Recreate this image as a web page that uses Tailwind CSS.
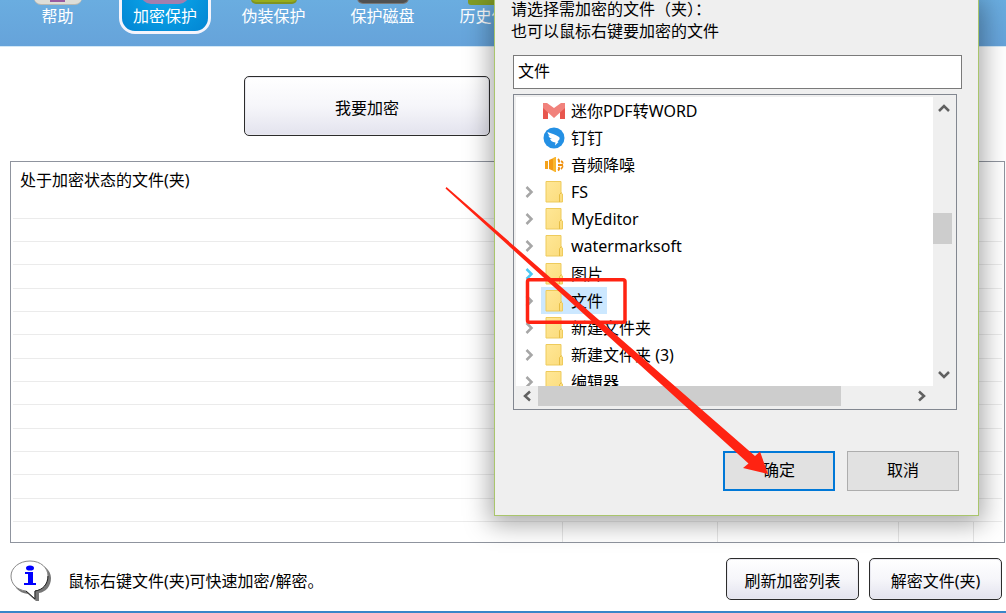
<!DOCTYPE html>
<html lang="zh-CN">
<head>
<meta charset="utf-8">
<title>加密保护</title>
<script src="https://cdn.jsdelivr.net/npm/@tailwindcss/browser@4"></script>
</head>
<body class="relative min-h-screen overflow-hidden flex flex-col bg-white text-black text-base font-['Noto_Sans','Noto_Sans_CJK_SC',sans-serif]">

<header class="h-[47px] shrink-0 overflow-hidden border-b border-[#d3e8f6] bg-linear-to-b from-[#6aade0] to-[#66a3da] text-white">
  <nav class="h-[34px] flex items-end gap-[17px] pl-3">
    <a href="#" class="w-[91px] h-24 pb-[6px] flex flex-col items-center justify-end leading-6">
      <svg class="w-12 h-12 -mb-1" viewBox="0 0 48 48"><rect x="0" y="0" width="48" height="45" rx="7" fill="#b9b9b2"/><rect x="0" y="0" width="48" height="44" rx="7" fill="#deded8"/><rect x="16" y="30" width="15" height="12" fill="#9a5aa0"/></svg>
      <span>帮助</span>
    </a>
    <a href="#" class="-ml-px w-[92px] h-24 pb-[3px] border-3 border-[#f4f4fc] rounded-2xl bg-radial from-[#10b0f0] to-[#0384d2] flex flex-col items-center justify-end leading-6">
      <svg class="w-12 h-12 -mb-1" viewBox="0 0 48 48"><rect x="0" y="0" width="48" height="44" rx="10" fill="#a27fae"/></svg>
      <span>加密保护</span>
    </a>
    <a href="#" class="w-[91px] h-24 pb-[6px] flex flex-col items-center justify-end leading-6">
      <svg class="w-12 h-12 -mb-1" viewBox="0 0 48 48"><rect x="1" y="0" width="46" height="44" rx="5" fill="#7f9420"/><rect x="1" y="0" width="46" height="42" rx="5" fill="#97ad1c"/></svg>
      <span>伪装保护</span>
    </a>
    <a href="#" class="ml-px w-[91px] h-24 pb-[6px] flex flex-col items-center justify-end leading-6">
      <svg class="w-13 h-12 -mb-1" viewBox="0 0 52 48"><rect x="0" y="0" width="52" height="44" rx="6" fill="#777"/><rect x="1" y="0" width="50" height="43" rx="5" fill="#505050"/></svg>
      <span>保护磁盘</span>
    </a>
    <a href="#" class="ml-px w-[91px] h-24 pb-[6px] flex flex-col items-center justify-end leading-6">
      <svg class="w-12 h-12 -mb-1" viewBox="0 0 48 48"><rect x="0" y="0" width="48" height="45" rx="3" fill="#819c25"/></svg>
      <span>历史伪装</span>
    </a>
  </nav>
</header>

<main class="grow flex flex-col pl-[10px] pr-px">
  <button class="mt-[29px] ml-[234px] w-[246px] h-[60px] rounded-[5px] border border-[#2c2c2c] bg-linear-to-b from-white via-[#f6f6fa] to-[#e3e3ee] shadow-[inset_0_0_0_1px_#e9e9f0] pt-1">我要加密</button>

  <div class="mt-[25px] h-[382px] border border-[#8f949e] px-[2px]">
    <table class="w-full h-[360px] table-fixed border-collapse">
      <colgroup><col><col class="w-[155px]"><col class="w-[181px]"><col class="w-[75px]"><col class="w-[29px]"></colgroup>
      <thead>
        <tr class="h-14 border-b border-[#ebebeb]"><th colspan="5" class="align-top text-left font-normal pl-[7px] pt-[6px] leading-6">处于加密状态的文件(夹)</th></tr>
      </thead>
      <tbody id="rows"></tbody>
    </table>
    <div class="h-5 flex justify-end">
      <div class="w-[155px] border-l border-[#e6e6e6]"></div>
      <div class="w-[181px] border-l border-[#e6e6e6]"></div>
      <div class="w-[75px] border-l border-[#e6e6e6]"></div>
      <div class="w-[29px] border-l border-[#e6e6e6]"></div>
    </div>
  </div>

  <footer class="grow flex items-center pr-[3px] pt-[3px]">
    <svg class="w-[42px] h-[42px] mt-1 shrink-0" viewBox="0 0 42 42">
      <path d="M22 3C33 3 41 10 41 18C41 26 36 32 29 33L29 41L26 41L18 34C8 33 3 26 3 18C3 9 11 3 22 3Z" fill="#777"/>
      <path d="M20 1C31 1 38 8 38 16C38 24 33 30 25 31L25 39L16 31C7 30 1 24 1 16C1 8 9 1 20 1Z" fill="#fff" stroke="#888" stroke-width="1"/>
      <path d="M16 31L25 39L25 31C33 30 38 24 38 16" fill="none" stroke="#222" stroke-width="1"/>
      <ellipse cx="20" cy="8" rx="4" ry="2.600" fill="#00f"/>
      <path d="M15 12H23V23H26V25H14V23H18V14H15Z" fill="#00f"/>
    </svg>
    <p class="ml-4 grow pt-1">鼠标右键文件(夹)可快速加密/解密。</p>
    <button class="w-[133px] h-[42px] rounded-[5px] border border-[#2c2c2c] bg-linear-to-b from-white via-[#f6f6fa] to-[#e3e3ee] shadow-[inset_0_0_0_1px_#e9e9f0] pt-1">刷新加密列表</button>
    <button class="ml-[10px] w-[133px] h-[42px] rounded-[5px] border border-[#2c2c2c] bg-linear-to-b from-white via-[#f6f6fa] to-[#e3e3ee] shadow-[inset_0_0_0_1px_#e9e9f0] pt-1">解密文件(夹)</button>
  </footer>
</main>
<div class="h-[2px] bg-[#3a86c8]"></div>

<!-- folder picker -->
<section role="dialog" aria-label="浏览文件夹" class="absolute left-[494px] top-0 w-[485px] h-[516px] border-x border-b border-[#a9c56c] bg-[#efefef] shadow-[0_4px_24px_4px_rgba(0,0,0,0.35)] px-[18px] flex flex-col">
  <label for="folder" class="leading-[22px] -mt-[2px] -ml-[2px]">请选择需加密的文件（夹）：<br>也可以鼠标右键要加密的文件</label>
  <input id="folder" value="文件" class="mt-[13px] w-[449px] h-[34px] shrink-0 border border-[#7a7a7a] bg-white px-1 pb-1">
  <div class="mt-[5px] w-[444px] h-[316px] shrink-0 border border-[#828790] bg-[#efefef] p-[2px] pb-[3px] grid grid-cols-[1fr_21px] grid-rows-[1fr_20px]">
    <div class="min-h-0 overflow-hidden bg-white">
      <ul id="tree" class="h-[299px] grid grid-rows-11"></ul>
    </div>
    <div class="flex flex-col items-center justify-between relative">
      <svg class="w-5 h-6" viewBox="0 0 20 24"><path d="M5 14L10 9L15 14" fill="none" stroke="#606060" stroke-width="2.500"/></svg>
      <div class="absolute left-0 top-[116px] w-[19px] h-[31px] bg-[#cdcdcd]"></div>
      <svg class="w-5 h-6" viewBox="0 0 20 24"><path d="M5 10L10 15L15 10" fill="none" stroke="#606060" stroke-width="2.500"/></svg>
    </div>
    <div class="flex items-center">
      <svg class="w-[22px] h-5 shrink-0" viewBox="0 0 22 20"><path d="M14 5.500L9 10L14 14.500" fill="none" stroke="#606060" stroke-width="2.500"/></svg>
      <div class="w-[303px] h-full bg-[#cdcdcd]"></div>
      <svg class="w-5 h-5 ml-auto" viewBox="0 0 20 20"><path d="M6 5.500L11 10L6 14.500" fill="none" stroke="#606060" stroke-width="2.500"/></svg>
    </div>
  </div>
  <div class="mt-[41px] flex justify-end gap-3 pr-px">
    <button class="w-28 h-10 border-2 border-[#0078d7] bg-[#e1e1e1] pb-[2px]">确定</button>
    <button class="w-28 h-10 border border-[#adadad] bg-[#e1e1e1] pb-[2px]">取消</button>
  </div>
</section>

<!-- annotation -->
<svg class="absolute left-0 top-0 w-[1006px] h-[613px] pointer-events-none" viewBox="0 0 1006 613">
  <rect x="527.500" y="279.700" width="97.500" height="42.500" rx="2" fill="none" stroke="#ff2312" stroke-width="3.500"/>
  <path d="M446.500 187L755 456L760 451.500L768 474L743 468L748.500 463.500L445.500 188.500Z" fill="#ff2312"/>
</svg>

<template id="folderIcon"><svg class="w-[18px] h-[22px] shrink-0" viewBox="0 0 18 22"><defs><linearGradient id="fg" x1="0" y1="0" x2="1" y2="1"><stop offset="0" stop-color="#ffe796"/><stop offset="1" stop-color="#fbdc7d"/></linearGradient></defs><path d="M1 .5H16V12L17.500 13V21H1Z" fill="url(#fg)" stroke="#eecb5c"/><path d="M14.500 21V13.500L16.500 11.500" fill="none" stroke="#e6bd45"/></svg></template>
<template id="mIcon"><svg class="w-[22px] h-[22px] shrink-0" viewBox="0 0 22 22"><path d="M0 3V19H5V10L0 3Z" fill="#e8564e"/><path d="M22 3V19H17V10Z" fill="#e8564e"/><path d="M0 3H4L11 8L18 3H22V8L11 18L0 8Z" fill="#f1827c"/></svg></template>
<template id="dingIcon"><svg class="w-[22px] h-[22px] shrink-0" viewBox="0 0 22 22"><circle cx="11" cy="11" r="10.500" fill="#2490e4"/><path d="M4.500 5C9 7 13 7.500 16 10C17.500 11.500 16 13.500 14.500 14.500L15.500 15L12 18.500L12.500 15.500C9 15 7.500 13.500 7 12L9 12C6.500 11 5.500 9.500 5.500 8.500L7 8.500C5.500 7.500 4.700 6.500 4.500 5Z" fill="#fff"/></svg></template>
<template id="soundIcon"><svg class="w-[22px] h-[22px] shrink-0" viewBox="0 0 22 22"><path d="M2 7H5V15H2Z" fill="#f4a21c"/><path d="M6 6L13 3V18L6 15Z" fill="#f39a12"/><path d="M10 4L13 3V18L10 17Z" fill="#f9b62c"/><path d="M15 5Q17 7 15.500 8.500M15.500 13Q17 15 15 16.500M18 7Q20 8 19.500 9.500M19.500 12Q20 13 18 15M15 11H20" fill="none" stroke="#ee9010" stroke-width="1.800"/></svg></template>

<script>
const rows = document.getElementById('rows');
for (let i = 0; i < 13; i++) rows.insertAdjacentHTML('beforeend', '<tr class="border-b border-[#ebebeb]"><td colspan="5"></td></tr>');

const items = [['m','迷你PDF转WORD'],['ding','钉钉'],['sound','音频降噪'],['folder','FS'],['folder','MyEditor'],['folder','watermarksoft'],['folder','图片','hot'],['folder','文件','sel'],['folder','新建文件夹'],['folder','新建文件夹 (3)'],['folder','编辑器']];
const tree = document.getElementById('tree');
for (const [icon, name, state] of items) {
  const svg = document.getElementById(icon + 'Icon').innerHTML;
  const color = state === 'hot' ? '#4cc8f4' : '#a6a6a6';
  const arrow = icon === 'folder' ? `<svg class="w-3 h-4" viewBox="0 0 12 16"><path d="M3.500 3L8.500 8L3.500 13" fill="none" stroke="${color}" stroke-width="2.500"/></svg>` : '';
  const bg = state === 'sel' ? 'bg-[#cce8ff]' : '';
  tree.insertAdjacentHTML('beforeend', `<li class="flex items-center min-h-0 pl-[7px]"><span class="w-[18px] shrink-0">${arrow}</span><span class="flex items-center h-full pr-1 ${bg}"><span class="w-[26px] mr-1 flex justify-center shrink-0">${svg}</span><span class="leading-6 whitespace-nowrap">${name}</span></span></li>`);
}
</script>
</body>
</html>
